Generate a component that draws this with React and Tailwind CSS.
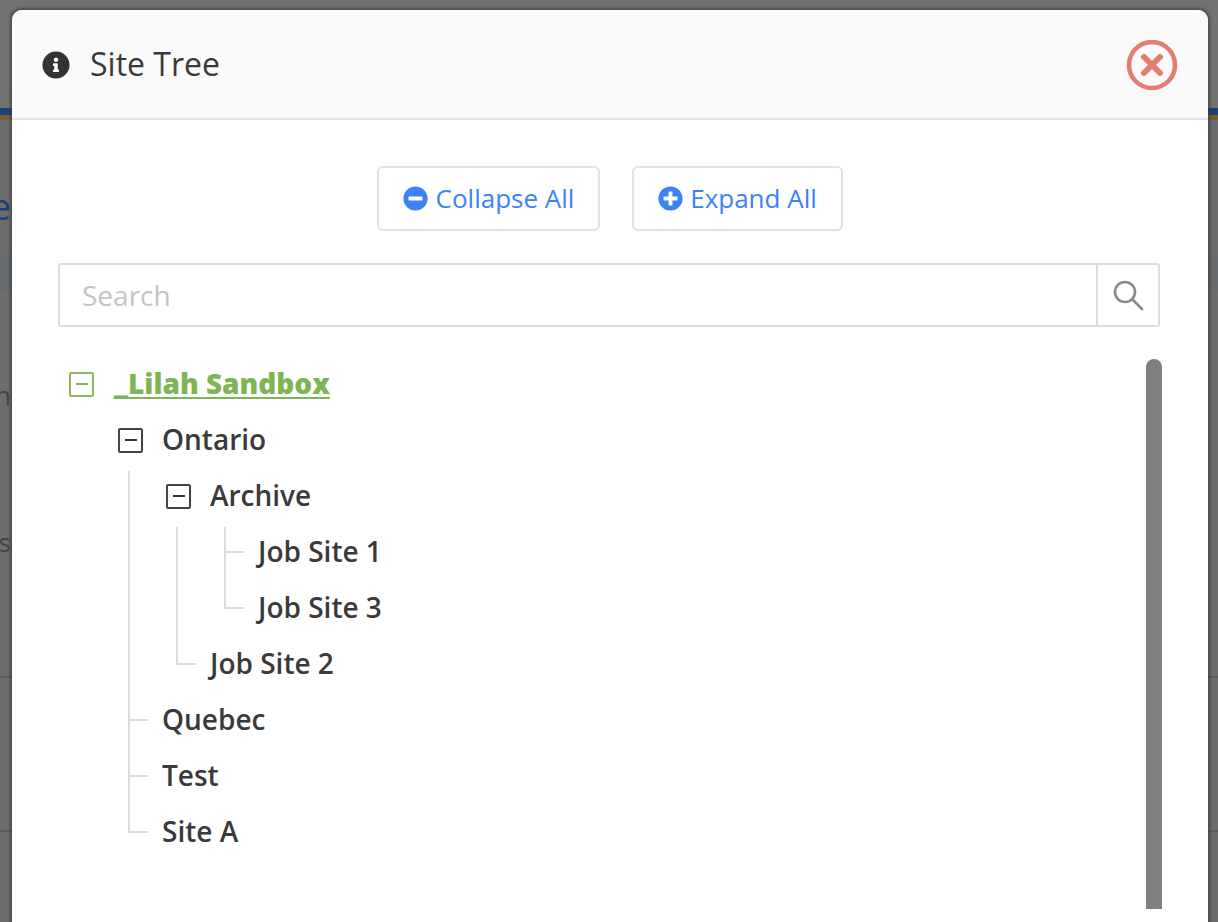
import React from "react";
import { FaInfoCircle, FaMinusCircle, FaPlusCircle } from "react-icons/fa";

const tree = [
  {
    name: "Ontario",
    children: [
      {
        name: "Archive",
        children: [{ name: "Job Site 1" }, { name: "Job Site 3" }],
      },
      { name: "Job Site 2" },
    ],
  },
  { name: "Quebec" },
  { name: "Test" },
  { name: "Site A" },
];

function ToggleBox({ green }) {
  return (
    <span
      className={`flex h-[25px] w-[25px] shrink-0 items-center justify-center rounded-[2px] border-2 ${
        green ? "border-[#8abb5f]" : "border-[#444444]"
      }`}
    >
      <span className={`h-[2px] w-[12px] ${green ? "bg-[#7db552]" : "bg-[#333333]"}`} />
    </span>
  );
}

function TreeNode({ node, first, last }) {
  const hasChildren = node.children && node.children.length > 0;
  let top = "top-0";
  if (first) top = hasChildren ? "top-[59px]" : "top-[3px]";
  return (
    <li className="relative pl-[48px]">
      <span className={`absolute left-[13px] w-[2px] bg-[#dcdcdc] ${top} ${last ? "h-[29px]" : "bottom-0"}`} />
      {!hasChildren && <span className="absolute left-[13px] top-[27px] h-[2px] w-[20px] bg-[#dcdcdc]" />}
      <div className="flex h-14 items-center">
        {hasChildren && (
          <span className="-ml-[45px] mr-[20px] flex">
            <ToggleBox />
          </span>
        )}
        <span className="-ml-px pb-[2px] text-[28px] font-semibold text-[#3a3a3a]">{node.name}</span>
      </div>
      {hasChildren && <TreeList items={node.children} />}
    </li>
  );
}

function TreeList({ items }) {
  return (
    <ul>
      {items.map((item, i) => (
        <TreeNode key={item.name} node={item} first={i === 0} last={i === items.length - 1} />
      ))}
    </ul>
  );
}

export default function App() {
  return (
    <div className="relative h-[922px] w-[1218px] overflow-hidden bg-[#6c6c6c] font-['Open_Sans',sans-serif]">
      {/* page behind the overlay, only the edges show */}
      <div className="flex h-full flex-col">
        <div className="h-[108px] bg-[#727272]" />
        <div className="h-[7px] bg-[#1d3f78]" />
        <div className="h-[5px] bg-[#75602f]" />
        <div className="flex h-[135px] w-[11px] justify-end overflow-hidden pt-[60px] text-[36px] leading-[54px] text-[#1d3f78]">e</div>
        <div className="h-[35px] bg-[#676a6c]" />
        <div className="flex h-[388px] flex-col border-b-2 border-[#5c5c5c]">
          <div className="flex h-[232px] w-[11px] justify-end pt-[85px] text-[26px] leading-[40px] text-[#444444]">n</div>
          <div className="flex w-[11px] justify-end text-[26px] leading-[40px] text-[#444444]">s</div>
        </div>
        <div className="h-[154px] border-b-2 border-[#5c5c5c]" />
      </div>

      <div className="absolute bottom-0 left-[12px] top-[10px] w-[1196px] rounded-t-[10px] bg-white shadow-[0_0_3px_2px_rgba(60,60,60,0.7)]">
        <div className="flex h-[110px] items-center justify-between rounded-t-[10px] border-b-2 border-[#e4e4e4] bg-[#fafafa] px-[30px]">
          <div className="flex items-center gap-[20px]">
            <FaInfoCircle className="mt-[2px] text-[#333333]" size={28} />
            <span className="text-[32px] text-[#3a3a3a]">Site Tree</span>
          </div>
          <svg width="52" height="52" viewBox="0 0 52 52" fill="none" stroke="#e27d70" className="mt-[2px]">
            <circle cx="26" cy="26" r="23" strokeWidth="4.5" />
            <path d="M18 18 L34 34 M34 18 L18 34" strokeWidth="6" strokeLinecap="round" />
          </svg>
        </div>

        <div className="relative px-[46px] pt-[46px]">
          <div className="flex justify-center gap-[32px]">
            <button className="flex h-[65px] w-[223px] items-center justify-center gap-[8px] rounded-[6px] border-2 border-[#e2e2e2] text-[26px] text-[#3b82f6]">
              <FaMinusCircle size={25} />
              Collapse All
            </button>
            <button className="flex h-[65px] w-[211px] items-center justify-center gap-[7px] rounded-[6px] border-2 border-[#e2e2e2] text-[26px] text-[#3b82f6]">
              <FaPlusCircle size={25} />
              Expand All
            </button>
          </div>

          <div className="mt-[32px] flex h-[64px] w-[1102px] rounded-[3px] border-2 border-[#dcdcdc]">
            <input
              placeholder="Search"
              className="min-w-0 flex-1 bg-white pl-[22px] text-[28px] text-[#333333] outline-none placeholder:text-[#c4c4c4]"
            />
            <div className="flex w-[62px] items-center justify-center border-l-2 border-[#dcdcdc]">
              <svg width="32" height="32" viewBox="0 0 32 32" fill="none" stroke="#8a8a8a" strokeWidth="2.6">
                <circle cx="13" cy="13" r="10" />
                <path d="M20.5 20.5 L30 30" strokeLinecap="round" />
              </svg>
            </div>
          </div>

          <div className="mt-[29px] pl-[11px]">
            <div className="flex h-14 items-center gap-[20px]">
              <ToggleBox green />
              <span className="pb-[2px] text-[28px] font-extrabold text-[#7db552] underline decoration-2 underline-offset-[3px]">_Lilah Sandbox</span>
            </div>
            <div className="ml-[46px]">
              <TreeList items={tree} />
            </div>
          </div>

          <div className="absolute left-[1134px] top-[239px] h-[550px] w-[16px] rounded-t-[8px] bg-[#808080]" />
        </div>
      </div>
    </div>
  );
}
